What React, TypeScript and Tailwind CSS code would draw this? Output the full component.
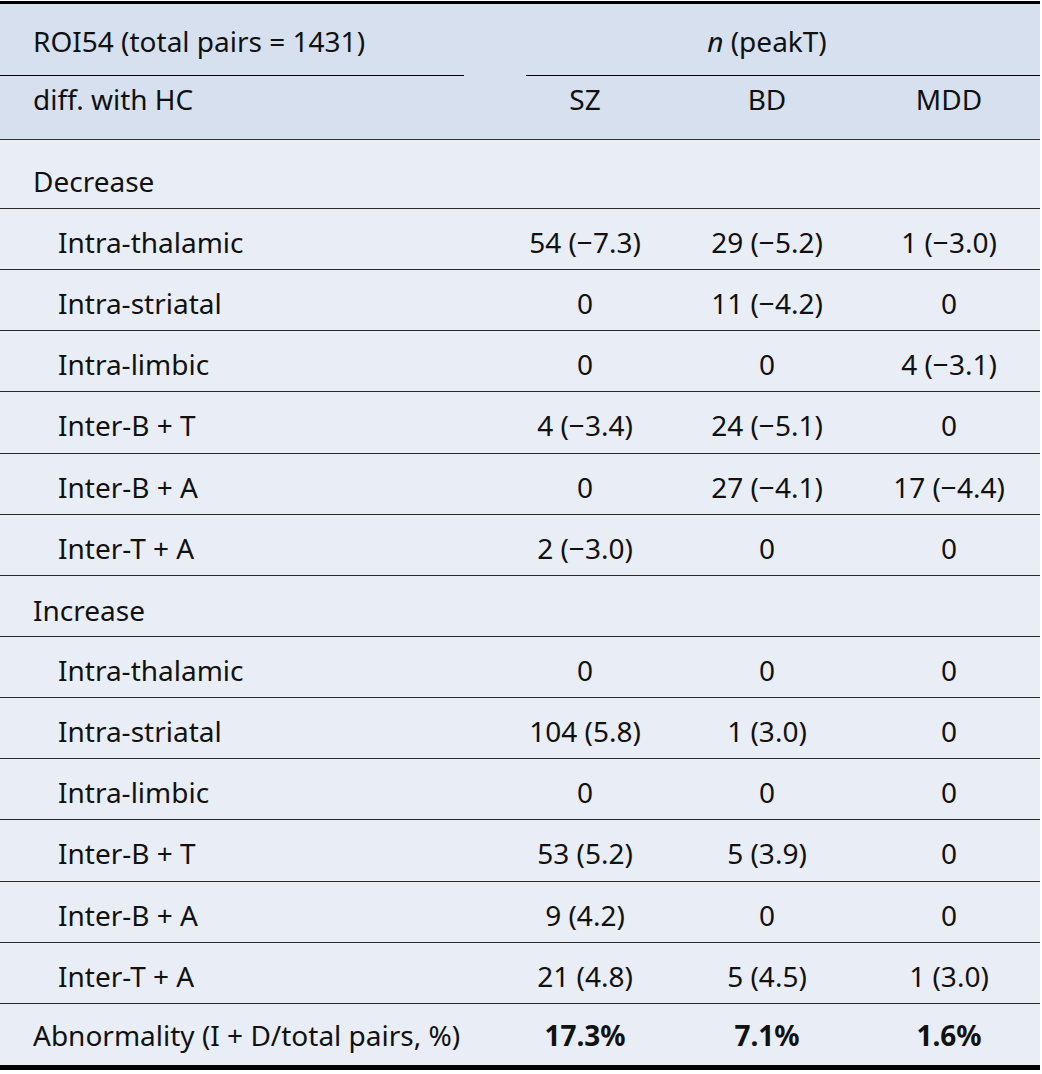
type Row = {
  label: string
  sz: string
  bd: string
  mdd: string
  h: string
}

const decrease: Row[] = [
  { label: 'Intra-thalamic', sz: '54 (−7.3)', bd: '29 (−5.2)', mdd: '1 (−3.0)', h: 'h-[61px]' },
  { label: 'Intra-striatal', sz: '0', bd: '11 (−4.2)', mdd: '0', h: 'h-[61px]' },
  { label: 'Intra-limbic', sz: '0', bd: '0', mdd: '4 (−3.1)', h: 'h-[61px]' },
  { label: 'Inter-B + T', sz: '4 (−3.4)', bd: '24 (−5.1)', mdd: '0', h: 'h-[62px]' },
  { label: 'Inter-B + A', sz: '0', bd: '27 (−4.1)', mdd: '17 (−4.4)', h: 'h-[61px]' },
  { label: 'Inter-T + A', sz: '2 (−3.0)', bd: '0', mdd: '0', h: 'h-[61px]' },
]

const increase: Row[] = [
  { label: 'Intra-thalamic', sz: '0', bd: '0', mdd: '0', h: 'h-[61px]' },
  { label: 'Intra-striatal', sz: '104 (5.8)', bd: '1 (3.0)', mdd: '0', h: 'h-[61px]' },
  { label: 'Intra-limbic', sz: '0', bd: '0', mdd: '0', h: 'h-[61px]' },
  { label: 'Inter-B + T', sz: '53 (5.2)', bd: '5 (3.9)', mdd: '0', h: 'h-[62px]' },
  { label: 'Inter-B + A', sz: '9 (4.2)', bd: '0', mdd: '0', h: 'h-[61px]' },
  { label: 'Inter-T + A', sz: '21 (4.8)', bd: '5 (4.5)', mdd: '1 (3.0)', h: 'h-[61px]' },
]

const cols = 'grid grid-cols-[494px_182px_182px_182px]'

function DataRow({ row }: { row: Row }) {
  return (
    <div className={`${cols} ${row.h} border-b border-[#2a2a2a] pt-[13px]`}>
      <div className="pl-[58px]">{row.label}</div>
      <div className="text-center">{row.sz}</div>
      <div className="text-center">{row.bd}</div>
      <div className="text-center">{row.mdd}</div>
    </div>
  )
}

function SectionRow({ label, h, pt }: { label: string; h: string; pt: string }) {
  return (
    <div className={`${h} ${pt} border-b border-[#2a2a2a] pl-[33px]`}>{label}</div>
  )
}

export default function App() {
  return (
    <div className="min-h-screen bg-white pt-px font-['Noto_Sans',sans-serif] text-[28px] leading-[40px] text-[#111]">
      <div className="w-[1040px] border-t-[3px] border-b-[5px] border-black bg-[#e9edf5]">
        <div className="bg-[#d6e0ee]">
          <div className={`${cols} h-[71px] pt-[17px]`}>
            <div className="pl-[33px]">ROI54 (total pairs = 1431)</div>
            <div className="col-span-3 text-center">
              <span className="italic">n</span> (peakT)
            </div>
          </div>
          <div className="flex h-px">
            <div className="w-[464px] bg-black" />
            <div className="ml-[62px] w-[514px] bg-black" />
          </div>
          <div className={`${cols} h-[64px] border-b-[1.5px] border-[#333] pt-[3px]`}>
            <div className="pl-[33px]">diff. with HC</div>
            <div className="text-center">SZ</div>
            <div className="text-center">BD</div>
            <div className="text-center">MDD</div>
          </div>
        </div>

        <SectionRow label="Decrease" h="h-[69px]" pt="pt-[21px]" />
        {decrease.map((r) => (
          <DataRow key={'d' + r.label} row={r} />
        ))}
        <SectionRow label="Increase" h="h-[61px]" pt="pt-[14px]" />
        {increase.map((r) => (
          <DataRow key={'i' + r.label} row={r} />
        ))}

        <div className={`${cols} h-[61px] pt-[11px]`}>
          <div className="pl-[33px]">Abnormality (I + D/total pairs, %)</div>
          <div className="text-center font-bold">17.3%</div>
          <div className="text-center font-bold">7.1%</div>
          <div className="text-center font-bold">1.6%</div>
        </div>
      </div>
    </div>
  )
}
